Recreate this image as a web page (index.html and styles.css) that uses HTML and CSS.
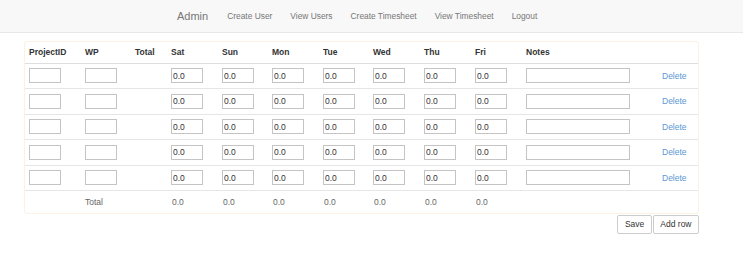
FILE: index.html
```html
<!DOCTYPE html>
<html lang="en">
  <head>
    <meta charset="UTF-8" />
    <title>Timesheet</title>
    <link rel="stylesheet" href="styles.css">
  </head>
  <body>
    <!-- Top navigation -->
    <nav class="navbar">
      <div class="nav-inner">
        <a class="brand" href="#">Admin</a>
        <a class="nav-link" href="#">Create User</a>
        <a class="nav-link" href="#">View Users</a>
        <a class="nav-link" href="#">Create Timesheet</a>
        <a class="nav-link" href="#">View Timesheet</a>
        <a class="nav-link" href="#">Logout</a>
      </div>
    </nav>

    <div class="page">
      <!-- Timesheet table -->
      <div class="panel">
        <table class="sheet">
          <thead>
            <tr>
              <th class="c-id">ProjectID</th>
              <th class="c-wp">WP</th>
              <th class="c-total">Total</th>
              <th class="c-day">Sat</th>
              <th class="c-day2">Sun</th>
              <th class="c-day">Mon</th>
              <th class="c-day2">Tue</th>
              <th class="c-day">Wed</th>
              <th class="c-day">Thu</th>
              <th class="c-day">Fri</th>
              <th class="c-notes">Notes</th>
              <th class="c-del"></th>
            </tr>
          </thead>
          <tbody id="rows"></tbody>
          <tfoot>
            <tr class="total-row">
              <td></td>
              <td>Total</td>
              <td></td>
              <td>0.0</td>
              <td>0.0</td>
              <td>0.0</td>
              <td>0.0</td>
              <td>0.0</td>
              <td>0.0</td>
              <td>0.0</td>
              <td></td>
              <td></td>
            </tr>
          </tfoot>
        </table>
      </div>
      <div class="actions">
        <button class="btn">Save</button>
        <button class="btn">Add row</button>
      </div>
    </div>

    <script>
      // Build the five editable rows
      const rows = document.getElementById("rows");
      function addRow() {
        const tr = document.createElement("tr");
        let html = '<td><input class="box" type="text" /></td>';
        html += '<td><input class="box" type="text" /></td>';
        html += "<td></td>";
        for (let i = 0; i < 7; i++) {
          html += '<td><input class="box" type="text" value="0.0" /></td>';
        }
        html += '<td><input class="box notes" type="text" /></td>';
        html += '<td><a class="delete" href="#">Delete</a></td>';
        tr.innerHTML = html;
        rows.appendChild(tr);
      }
      for (let i = 0; i < 5; i++) {
        addRow();
      }
    </script>
  </body>
</html>
```

FILE: styles.css
```css
/* Base */
* {
  box-sizing: border-box;
}
body {
  margin: 0;
  font-family: "Liberation Sans", Arial, sans-serif;
  font-size: 8.5px;
  color: #333;
  background: #fff;
}
a {
  text-decoration: none;
}
/* Navbar */
.navbar {
  height: 33px;
  background: #f8f8f8;
  border-bottom: 1px solid #e7e7e7;
}
.nav-inner {
  display: flex;
  align-items: center;
  height: 31px;
  padding-left: 168px;
}
.brand {
  font-size: 11px;
  color: #777;
  padding: 0 10px 0 9px;
}
.nav-link {
  font-size: 8.4px;
  color: #777;
  padding: 0 9px;
}
/* Page */
.page {
  padding: 8px 44px 0 24px;
}
.panel {
  border: 1px solid #fcf1e3;
  border-radius: 3px;
}
/* Table */
.sheet {
  width: 100%;
  border-collapse: collapse;
  table-layout: fixed;
}
.sheet th,
.sheet td {
  padding: 0 0 0 5px;
  text-align: left;
  vertical-align: middle;
}
.sheet th:first-child,
.sheet td:first-child {
  padding-left: 4px;
}
.sheet th {
  height: 21px;
  font-weight: bold;
  border-bottom: 1px solid #dedede;
}
.sheet tbody td {
  height: 25.5px;
  border-bottom: 1px solid #e6e6e6;
}
.c-id {
  width: 55px;
}
.c-wp {
  width: 50px;
}
.c-total {
  width: 36px;
}
.c-day {
  width: 51px;
}
.c-day2 {
  width: 50px;
}
.c-notes {
  width: 136px;
}
/* Inputs */
.box {
  display: block;
  width: 32px;
  height: 15px;
  margin: 0;
  padding: 0 1px;
  border: 1px solid #c4c4c4;
  border-radius: 0;
  font-family: "Liberation Sans", Arial, sans-serif;
  font-size: 8.5px;
  color: #333;
  background: #fff;
}
.box.notes {
  width: 104px;
}
.delete {
  color: #5a98d4;
}
/* Totals */
.total-row td {
  height: 22px;
  color: #666;
}
.total-row td:nth-child(n + 4) {
  padding-left: 6px;
}
/* Buttons */
.actions {
  display: flex;
  justify-content: flex-end;
  gap: 1px;
  padding-top: 1px;
}
.btn {
  height: 19px;
  padding: 0 6.5px;
  font-family: "Liberation Sans", Arial, sans-serif;
  font-size: 8.5px;
  color: #333;
  background: #fff;
  border: 1px solid #ccc;
  border-radius: 2px;
}
```
